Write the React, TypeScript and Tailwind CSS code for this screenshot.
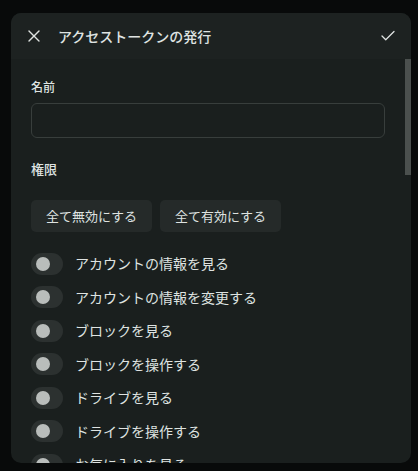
import React from "react";
import { X, Check } from "lucide-react";

const perms = [
  "アカウントの情報を見る",
  "アカウントの情報を変更する",
  "ブロックを見る",
  "ブロックを操作する",
  "ドライブを見る",
  "ドライブを操作する",
  "お気に入りを見る",
];

export default function App() {
  return (
    <div
      className="w-[418px] h-[471px] bg-[#080a0a] pl-[11px] pt-[13px] overflow-hidden"
      style={{ fontFamily: '"Noto Sans CJK JP", "Noto Sans", sans-serif' }}
    >
      <div className="w-[400px] h-[450px] rounded-[10px] overflow-hidden flex flex-col bg-[#1a1f1e] text-[#dfe3e1]">
        <div className="h-[46px] shrink-0 bg-[#1d2221] flex items-center pl-[13px] pr-[14px]">
          <X size={20} strokeWidth={1.6} className="text-[#dfe3e1]" />
          <div className="ml-[14px] text-[14px] font-medium">アクセストークンの発行</div>
          <div className="flex-1" />
          <Check size={18} strokeWidth={1.7} className="text-[#dfe3e1]" />
        </div>
        <div className="flex-1 flex min-h-0">
          <div className="flex-1 pl-[20px] pr-[20px] overflow-hidden">
            <div className="mt-[20px] text-[12px] leading-[16px] font-medium">名前</div>
            <div className="mt-[8px] h-[35px] rounded-[6px] border border-[#383e3c] bg-[#1a1f1e]" />
            <div className="mt-[22px] text-[13px] leading-[18px] font-medium">権限</div>
            <div className="mt-[22px] flex gap-[8px]">
              <button className="h-[32px] w-[121px] rounded-[5px] bg-[#252a29] text-[13px] text-[#dfe3e1]">
                全て無効にする
              </button>
              <button className="h-[32px] w-[121px] rounded-[5px] bg-[#252a29] text-[13px] text-[#dfe3e1]">
                全て有効にする
              </button>
            </div>
            <div className="mt-[15px] flex flex-col">
              {perms.map((p) => (
                <div key={p} className="h-[33.5px] shrink-0 flex items-center">
                  <div className="w-[32px] h-[22px] rounded-full bg-[#2c3130] flex items-center pl-[5px]">
                    <div className="w-[14px] h-[14px] rounded-full bg-[#b9bdbb]" />
                  </div>
                  <div className="ml-[12px] text-[14px]">{p}</div>
                </div>
              ))}
            </div>
          </div>
          <div className="w-[6px] shrink-0">
            <div className="h-[116px] bg-[#4b504e]" />
          </div>
        </div>
      </div>
    </div>
  );
}
